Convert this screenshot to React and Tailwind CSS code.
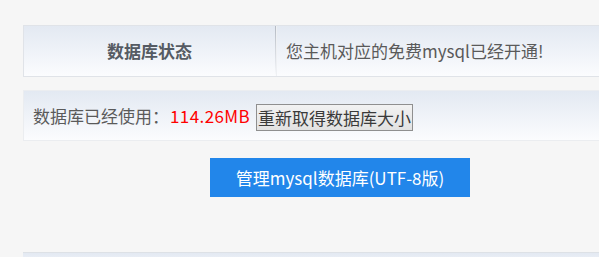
export default function App() {
  const font = { fontFamily: '"Microsoft YaHei", "Noto Sans CJK SC", "Noto Sans", sans-serif' };
  return (
    <div className="w-[599px] h-[257px] overflow-hidden bg-[#f6f6f6] text-[17px] text-[#5a5a5a]" style={font}>
      <div className="pt-[25px] pl-[23px]">
        <div className="w-[640px] h-[52px] flex border border-[#e0e3e8] bg-gradient-to-b from-[#e3e9f2] to-[#fbfcfe]">
          <div className="w-[251px] flex items-center justify-center font-bold text-[#555b63]">数据库状态</div>
          <div className="w-[1px] h-full bg-gradient-to-b from-[#b4bac3] via-[#d5d9df] to-transparent"></div>
          <div className="w-[1px] h-full bg-[#eef0f3]"></div>
          <div className="flex-1 flex items-center pl-[9px]">您主机对应的免费mysql已经开通!</div>
        </div>
        <div className="mt-[13px] w-[640px] h-[51px] flex items-center border border-[#ebedf0] bg-gradient-to-b from-[#e3e9f2] to-[#fbfcfe] pl-[9px]">
          <span>数据库已经使用：</span>
          <span className="text-[#ff0000] ml-[1px] tracking-[0.4px]">114.26MB</span>
          <button className="ml-[6px] mt-[3px] h-[27px] w-[157px] leading-[25px] border border-[#8f8f8f] bg-gradient-to-b from-[#f2f2f2] to-[#e2e2e2] text-[#3a3a3a] text-[17px]" style={font}>重新取得数据库大小</button>
        </div>
        <div className="mt-[17px] pl-[187px]">
          <div className="w-[260px] h-[39px] bg-[#2286ea] text-white flex items-center justify-center">管理mysql数据库(UTF-8版)</div>
        </div>
        <div className="mt-[55px] w-[640px] h-[20px] border-t border-[#dde1e6] bg-gradient-to-b from-[#e3e9f2] to-[#fbfcfe]"></div>
      </div>
    </div>
  );
}
